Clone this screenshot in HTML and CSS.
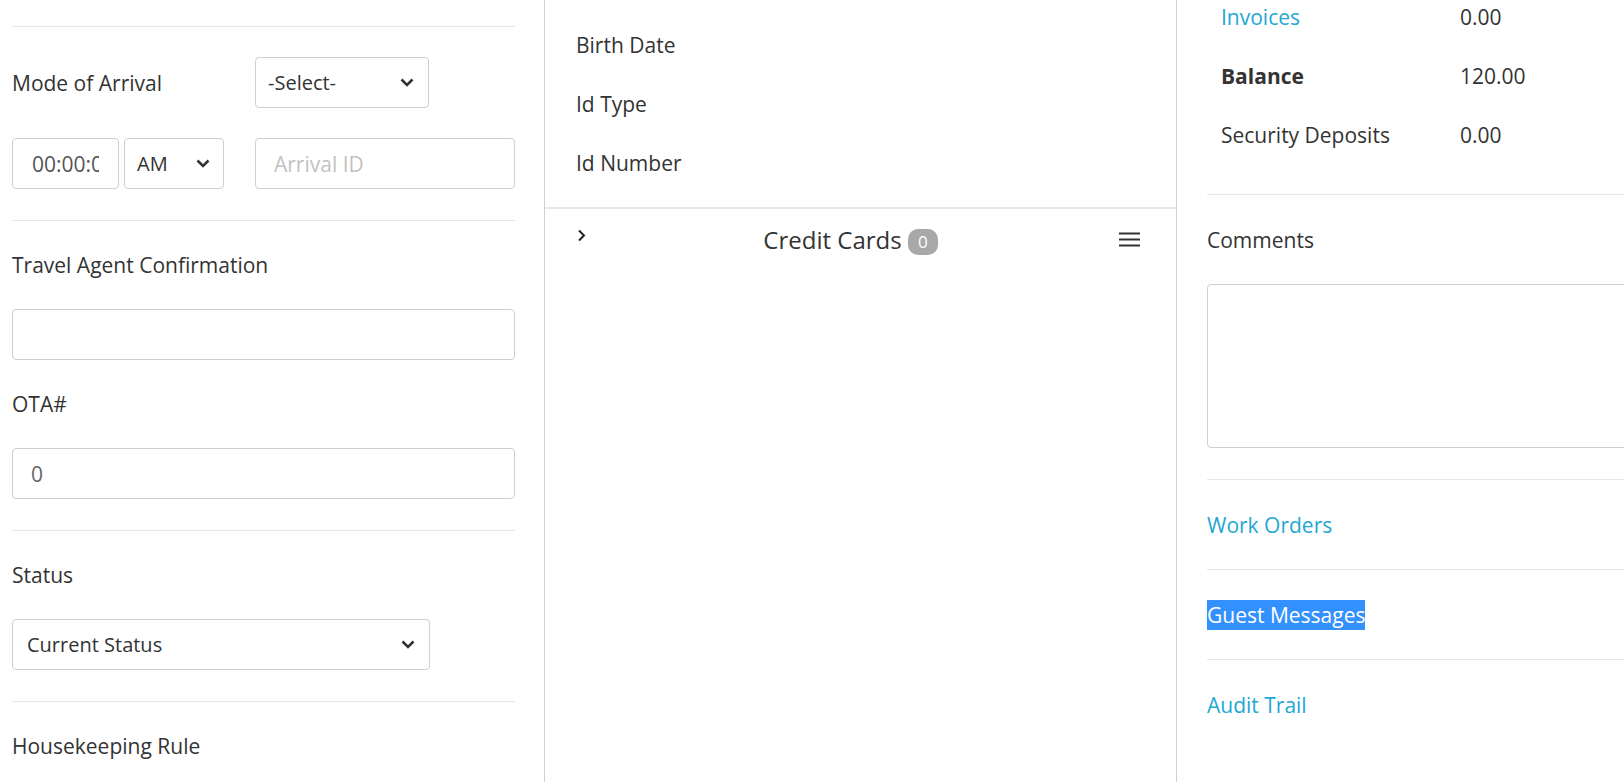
FILE: index.html
```html
<!DOCTYPE html>
<html lang="en">
<head>
<meta charset="utf-8">
<title>Reservation details</title>
<link rel="stylesheet" href="styles.css">
</head>
<body>
<div class="page">
  <section class="col col-left">
    <div class="block block-top"></div>
    <div class="block">
      <div class="row">
        <label class="label label-inline">Mode of Arrival</label>
        <div class="select select-mode">
          <span>-Select-</span>
          <svg class="caret" width="14" height="9" viewBox="0 0 14 9"><polyline points="1.5,1.5 7,7 12.5,1.5" fill="none" stroke="#333" stroke-width="2.6"/></svg>
        </div>
      </div>
      <div class="row">
        <div class="time-group">
          <input class="input input-time" type="text" value="00:00:00">
          <div class="select select-ampm">
            <span>AM</span>
            <svg class="caret" width="14" height="9" viewBox="0 0 14 9"><polyline points="1.5,1.5 7,7 12.5,1.5" fill="none" stroke="#333" stroke-width="2.6"/></svg>
          </div>
        </div>
        <input class="input input-arrival" type="text" placeholder="Arrival ID">
      </div>
    </div>
    <div class="block">
      <label class="label">Travel Agent Confirmation</label>
      <input class="input input-full" type="text">
      <label class="label">OTA#</label>
      <input class="input input-full input-muted" type="text" value="0">
    </div>
    <div class="block">
      <label class="label">Status</label>
      <div class="select select-status">
        <span>Current Status</span>
        <svg class="caret" width="14" height="9" viewBox="0 0 14 9"><polyline points="1.5,1.5 7,7 12.5,1.5" fill="none" stroke="#333" stroke-width="2.6"/></svg>
      </div>
    </div>
    <div class="block block-last">
      <label class="label">Housekeeping Rule</label>
    </div>
  </section>

  <section class="col col-mid">
    <div class="guest-fields">
      <div class="field-row">Birth Date</div>
      <div class="field-row">Id Type</div>
      <div class="field-row">Id Number</div>
    </div>
    <div class="panel-head">
      <svg class="chev" width="9" height="13" viewBox="0 0 9 13"><polyline points="2,1.5 7,6.5 2,11.5" fill="none" stroke="#222" stroke-width="2"/></svg>
      <div class="panel-title">Credit Cards <span class="badge">0</span></div>
      <svg class="burger" width="21" height="15" viewBox="0 0 21 15"><rect x="0" y="0.5" width="21" height="2" fill="#333"/><rect x="0" y="6.5" width="21" height="2" fill="#333"/><rect x="0" y="12.5" width="21" height="2" fill="#333"/></svg>
    </div>
  </section>

  <section class="col col-right">
    <div class="totals">
      <div class="total-row"><a class="link total-label" href="#">Invoices</a><span class="total-value">0.00</span></div>
      <div class="total-row"><strong class="total-label">Balance</strong><span class="total-value">120.00</span></div>
      <div class="total-row"><span class="total-label">Security Deposits</span><span class="total-value">0.00</span></div>
    </div>
    <div class="rblock">
      <label class="label label-right">Comments</label>
      <textarea class="textarea"></textarea>
    </div>
    <div class="rblock"><a class="link" href="#">Work Orders</a></div>
    <div class="rblock"><a class="link selected" href="#">Guest Messages</a></div>
    <div class="rblock rblock-last"><a class="link" href="#">Audit Trail</a></div>
  </section>
</div>
</body>
</html>
```

FILE: styles.css
```css
* { box-sizing: border-box; }
html, body {
  margin: 0;
  padding: 0;
  overflow: hidden;
  background: #fff;
}
body {
  font-family: "Open Sans", "Liberation Sans", sans-serif;
  font-size: 21px;
  line-height: 28px;
  color: #333;
}
.page {
  display: grid;
  grid-template-columns: 545px 632px 560px;
  height: 782px;
  width: 1737px;
}
.col { height: 782px; }
.col-left {
  border-right: 1px solid #d0d0d0;
  padding: 0 29px 0 12px;
}
.col-mid {
  border-right: 1px solid #d0d0d0;
}

/* left column */
.block {
  display: flex;
  flex-direction: column;
  gap: 30px;
  padding: 30px 0 31px;
  border-bottom: 1px solid #e6e6e6;
}
.block-top {
  height: 27px;
  padding: 0;
}
.block-last { border-bottom: 0; }
.row {
  display: flex;
  align-items: center;
  height: 51px;
}
.label {
  display: block;
  line-height: 28px;
}
.label-inline { width: 243px; }
.input, .select, .textarea {
  height: 51px;
  border: 1px solid #cfcfcf;
  border-radius: 4px;
  font-family: inherit;
  font-size: 21px;
  color: #333;
  background: #fff;
}
.input {
  padding: 0 18px;
  outline: none;
}
.input::placeholder { color: #c2c2c2; }
.input-full { width: 100%; }
.input-muted { color: #666; }
.select {
  display: flex;
  align-items: center;
  justify-content: space-between;
  padding: 0 14px 0 12px;
  font-size: 20px;
}
.select-mode { width: 174px; }
.time-group {
  display: flex;
  gap: 5px;
  width: 243px;
}
.input-time {
  width: 107px;
  padding: 0 19px;
  color: #555;
}
.select-ampm { width: 100px; padding: 0 13px 0 12px; }
.input-arrival { width: 260px; }
.select-status { width: 418px; padding-left: 14px; }
.caret { flex: none; }

/* middle column */
.guest-fields {
  padding: 15px 0 15px 31px;
  border-bottom: 2px solid #e6e6e6;
}
.field-row {
  height: 59px;
  display: flex;
  align-items: center;
}
.panel-head {
  display: flex;
  align-items: flex-start;
  padding: 19px 36px 0 32px;
}
.chev { margin-top: 1px; flex: none; }
.panel-title {
  flex: 1;
  text-align: center;
  font-size: 24px;
  line-height: 32px;
  margin-top: -4px;
  padding-right: 4px;
  color: #333;
}
.badge {
  display: inline-block;
  vertical-align: 1px;
  background: #a8a8a8;
  color: #fff;
  font-size: 17px;
  line-height: 26px;
  height: 26px;
  padding: 0 10px;
  border-radius: 10px;
}
.burger { margin-top: 4px; flex: none; }

/* right column */
.col-right { padding: 0 30px 0 30px; }
.totals {
  margin-top: -13px;
  padding: 0 0 30px 14px;
  border-bottom: 1px solid #e6e6e6;
}
.total-row {
  display: flex;
  align-items: center;
  height: 59px;
}
.total-label { width: 239px; }
.total-value { color: #333; }
.link {
  color: #23a7d3;
  text-decoration: none;
}
.rblock {
  display: flex;
  flex-direction: column;
  align-items: flex-start;
  gap: 29px;
  padding: 30px 0 29px;
  line-height: 30px;
  border-bottom: 1px solid #e6e6e6;
}
.label-right { line-height: 30px; }
.rblock-last { border-bottom: 0; }
.textarea {
  width: 100%;
  height: 164px;
  resize: none;
  outline: none;
  margin-bottom: 2px;
}
.selected {
  background: #3390ff;
  color: #fff;
}
```
